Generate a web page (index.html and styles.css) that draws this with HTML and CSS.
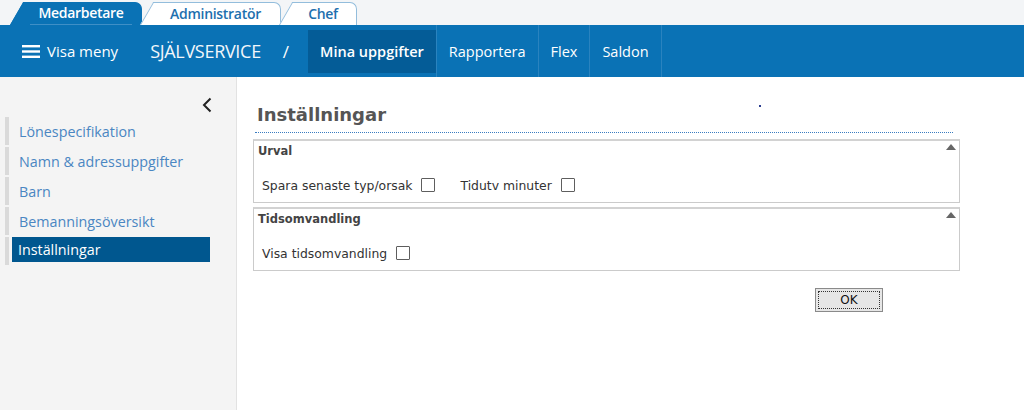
FILE: index.html
```html
<!DOCTYPE html>
<html lang="sv">
<head>
<meta charset="utf-8">
<title>Inställningar</title>
<link rel="stylesheet" href="styles.css">
</head>
<body>
<div class="tabs">
  <div class="tab active"><span>Medarbetare</span></div>
  <div class="tab tab-admin"><span>Administratör</span></div>
  <div class="tab tab-chef"><span>Chef</span></div>
</div>
<nav class="topbar">
  <div class="menu-toggle">
    <svg class="burger" width="18" height="13" viewBox="0 0 18 13"><rect x="0" y="0" width="18" height="2.4" fill="#fff"/><rect x="0" y="5.3" width="18" height="2.4" fill="#fff"/><rect x="0" y="10.6" width="18" height="2.4" fill="#fff"/></svg>
    <span>Visa meny</span>
  </div>
  <div class="brand">SJÄLVSERVICE</div>
  <div class="slash">/</div>
  <ul class="navitems">
    <li class="active">Mina uppgifter</li>
    <li>Rapportera</li>
    <li>Flex</li>
    <li class="last">Saldon</li>
  </ul>
</nav>
<div class="layout">
  <aside class="sidebar">
    <div class="collapse">
      <svg width="10" height="16" viewBox="0 0 10 16"><path d="M8.5 1.5 L2 8 L8.5 14.5" fill="none" stroke="#222" stroke-width="2"/></svg>
    </div>
    <ul class="sidemenu">
      <li><a>Lönespecifikation</a></li>
      <li><a>Namn &amp; adressuppgifter</a></li>
      <li><a>Barn</a></li>
      <li><a>Bemanningsöversikt</a></li>
      <li class="current"><a>Inställningar</a></li>
    </ul>
  </aside>
  <main class="content">
    <span class="dot"></span>
    <h1 class="title">Inställningar</h1>
    <section class="panel">
      <div class="panel-head">Urval<span class="toggle"></span></div>
      <div class="panel-row">
        <label class="field">Spara senaste typ/orsak<span class="check"></span></label>
        <label class="field">Tidutv minuter<span class="check"></span></label>
      </div>
    </section>
    <section class="panel panel-second">
      <div class="panel-head">Tidsomvandling<span class="toggle"></span></div>
      <div class="panel-row">
        <label class="field">Visa tidsomvandling<span class="check"></span></label>
      </div>
    </section>
    <div class="actions"><button class="ok">OK</button></div>
  </main>
</div>
</body>
</html>
```
FILE: styles.css
```css
html, body {
  margin: 0;
  padding: 0;
}
body {
  width: 1024px;
  height: 410px;
  overflow: hidden;
  background: #fff;
  font-family: "Open Sans", "Noto Sans", sans-serif;
}

/* tabs */
.tabs {
  display: flex;
  align-items: flex-end;
  height: 25px;
  padding-left: 10px;
  background: #f3f5f7;
}
.tab {
  position: relative;
  isolation: isolate;
  height: 23px;
  width: 132px;
  display: flex;
  align-items: center;
  justify-content: center;
  font-size: 14px;
  font-weight: 600;
  letter-spacing: -0.3px;
  color: #1d6fae;
  padding-left: 10px;
  box-sizing: border-box;
}
.tab::before,
.tab::after {
  content: "";
  position: absolute;
  top: 0;
  bottom: 0;
  z-index: -1;
  background: #fff;
  border-top: 1px solid #93bddc;
}
.tab::before {
  left: 0;
  width: 28px;
  border-left: 1px solid #93bddc;
  transform: skewX(-30deg);
  transform-origin: bottom left;
}
.tab::after {
  left: 14px;
  right: 0;
  border-right: 1px solid #93bddc;
  border-top-right-radius: 7px;
}
.tab.active {
  height: 25px;
  color: #fff;
}
.tab.active::before,
.tab.active::after {
  background: #0a72b5;
  border-color: #0a72b5;
  top: 2px;
}
.tab.active span {
  border-bottom: 1px solid #3f8fc6;
  padding: 0 8px 2px 8px;
  margin-top: 2px;
}
.tab-admin {
  width: 141px;
  margin-left: -2px;
  height: 23px;
}
.tab-chef {
  width: 78px;
  margin-left: -2px;
}

/* top bar */
.topbar {
  display: flex;
  align-items: center;
  height: 52px;
  background: #0a72b5;
  color: #fff;
  padding-left: 22px;
  box-sizing: border-box;
}
.menu-toggle {
  display: flex;
  align-items: center;
  font-size: 15px;
}
.burger {
  margin-right: 7px;
}
.brand {
  margin-left: 32px;
  font-size: 18px;
  letter-spacing: -0.3px;
  color: #f2f7fb;
}
.slash {
  margin-left: 22px;
  font-size: 17px;
}
.navitems {
  display: flex;
  align-self: stretch;
  list-style: none;
  margin: 0 0 0 19px;
  padding: 0;
}
.navitems li {
  display: flex;
  align-items: center;
  padding: 0 12px;
  font-size: 14.5px;
  border-left: 1px solid #2a83bf;
}
.navitems li.active {
  border-left: none;
  padding: 0 12px;
  font-weight: 600;
  background: #045c97;
  box-shadow: inset 0 5px 0 #0a72b5, inset 0 -4px 0 #0a72b5;
}
.navitems li.last {
  border-right: 1px solid #2a83bf;
}

/* layout */
.layout {
  display: flex;
  height: 333px;
}
.sidebar {
  width: 236px;
  flex: none;
  background: #f4f4f4;
  border-right: 1px solid #e2e2e2;
}
.collapse {
  display: flex;
  justify-content: flex-end;
  padding: 20px 24px 0 0;
  height: 16px;
}
.sidemenu {
  list-style: none;
  margin: 4px 0 0 5px;
  padding: 0;
}
.sidemenu li {
  height: 28px;
  margin-bottom: 2px;
  border-left: 4px solid #dadada;
  display: flex;
  align-items: center;
}
.sidemenu a {
  padding-left: 10px;
  font-size: 14.3px;
  color: #4a86c2;
}
.sidemenu li.current {
  align-items: flex-start;
}
.sidemenu li.current a {
  margin-left: 3px;
  width: 198px;
  height: 25px;
  line-height: 25px;
  padding-left: 6px;
  box-sizing: border-box;
  background: #00578f;
  color: #fff;
}

/* content */
.content {
  position: relative;
  flex: 1;
  padding: 27px 0 0 16px;
  font-family: "DejaVu Sans", Verdana, sans-serif;
}
.dot {
  position: absolute;
  left: 522px;
  top: 28px;
  width: 2px;
  height: 2px;
  background: #2b3d8f;
}
.title {
  margin: 0 63px 0 2px;
  width: 698px;
  padding: 0 0 6px 2px;
  box-sizing: border-box;
  font-size: 18px;
  line-height: 22px;
  font-weight: bold;
  color: #555;
  border-bottom: 1px dotted #3a7cc0;
}
.panel {
  position: relative;
  width: 707px;
  box-sizing: border-box;
  margin-top: 6px;
  border: 1px solid #cbcbcb;
  border-top: 2px solid #d2d2d2;
  padding-bottom: 7px;
}
.panel-second {
  margin-top: 4px;
}
.panel-head {
  height: 20px;
  line-height: 20px;
  padding-left: 4px;
  font-size: 11.5px;
  font-weight: bold;
  color: #444;
}
.toggle {
  position: absolute;
  right: 3px;
  top: 3px;
  width: 0;
  height: 0;
  border-left: 5.5px solid transparent;
  border-right: 5.5px solid transparent;
  border-bottom: 6px solid #666;
}
.panel-row {
  display: flex;
  align-items: center;
  height: 20px;
  margin-top: 14px;
  padding-left: 8px;
}
.field {
  display: flex;
  align-items: center;
  font-size: 12.4px;
  color: #333;
  margin-right: 25px;
}
.check {
  width: 14px;
  height: 14px;
  box-sizing: border-box;
  margin-left: 9px;
  border: 1px solid #5e5e5e;
  border-radius: 1px;
  background: #fff;
}
.actions {
  padding: 17px 0 0 562px;
}
.ok {
  width: 68px;
  height: 24px;
  padding: 0;
  font-family: "DejaVu Sans", Verdana, sans-serif;
  font-size: 12px;
  color: #111;
  background: #e6e6e6;
  border: 1px solid #8a8a8a;
  outline: 1px dotted #333;
  outline-offset: -4px;
  border-radius: 0;
}
```
